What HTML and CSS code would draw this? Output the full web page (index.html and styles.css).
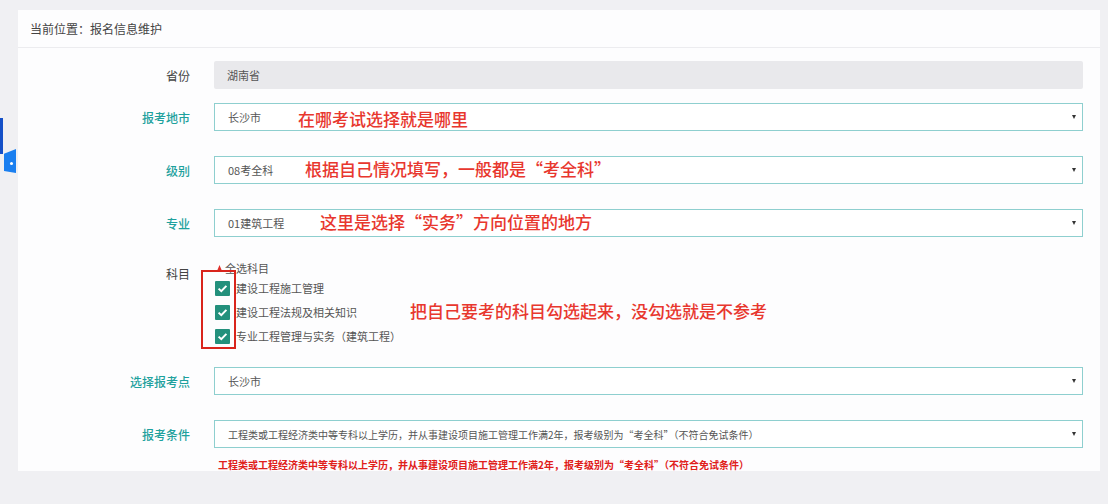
FILE: index.html
```html
<!DOCTYPE html>
<html lang="zh">
<head>
<meta charset="utf-8">
<link rel="stylesheet" href="styles.css">
</head>
<body>
<div class="side">
  <div class="tab-dark"></div>
  <div class="tab-blue"><span class="dot"></span></div>
</div>
<div class="card">
  <div class="head">当前位置：报名信息维护</div>
  <div class="form">
    <div class="row r1">
      <div class="lbl">省份</div>
      <div class="inp grey">湖南省</div>
    </div>
    <div class="row">
      <div class="lbl teal">报考地市</div>
      <div class="inp sel"><span>长沙市</span><i class="arr"></i>
        <span class="note n1">在哪考试选择就是哪里</span></div>
    </div>
    <div class="row">
      <div class="lbl teal">级别</div>
      <div class="inp sel"><span>08考全科</span><i class="arr"></i>
        <span class="note n2">根据自己情况填写，一般都是“考全科”</span></div>
    </div>
    <div class="row">
      <div class="lbl teal">专业</div>
      <div class="inp sel"><span>01建筑工程</span><i class="arr"></i>
        <span class="note n3">这里是选择“实务”方向位置的地方</span></div>
    </div>
    <div class="row subj">
      <div class="lbl sl">科目</div>
      <div class="checks">
        <div class="all"><i class="mark"></i>全选科目</div>
        <div class="item"><span class="cb"><svg viewBox="0 0 15 15" width="15" height="15"><path d="M3.6 7.6 L6.3 10.2 L11.4 4.9" fill="none" stroke="#fff" stroke-width="2"/></svg></span>建设工程施工管理</div>
        <div class="item"><span class="cb"><svg viewBox="0 0 15 15" width="15" height="15"><path d="M3.6 7.6 L6.3 10.2 L11.4 4.9" fill="none" stroke="#fff" stroke-width="2"/></svg></span>建设工程法规及相关知识</div>
        <div class="item"><span class="cb"><svg viewBox="0 0 15 15" width="15" height="15"><path d="M3.6 7.6 L6.3 10.2 L11.4 4.9" fill="none" stroke="#fff" stroke-width="2"/></svg></span>专业工程管理与实务（建筑工程）</div>
        <div class="redbox"></div>
        <span class="note n4">把自己要考的科目勾选起来，没勾选就是不参考</span>
      </div>
    </div>
    <div class="row">
      <div class="lbl teal">选择报考点</div>
      <div class="inp sel"><span>长沙市</span><i class="arr"></i></div>
    </div>
    <div class="row last">
      <div class="lbl teal">报考条件</div>
      <div class="inp sel"><span class="long">工程类或工程经济类中等专科以上学历，并从事建设项目施工管理工作满2年，报考级别为“考全科”（不符合免试条件）</span><i class="arr"></i></div>
    </div>
    <div class="warn">工程类或工程经济类中等专科以上学历，并从事建设项目施工管理工作满2年，报考级别为“考全科”（不符合免试条件）</div>
  </div>
</div>
</body>
</html>
```

FILE: styles.css
```css
html, body {
  margin: 0;
  padding: 0;
}
body {
  width: 1108px;
  height: 504px;
  background: #f0f0f3;
  display: flex;
  align-items: flex-start;
  font-family: "Noto Sans CJK SC", "Liberation Sans", sans-serif;
  color: #444;
  overflow: hidden;
}
.side {
  width: 18px;
  flex: none;
  display: flex;
  flex-direction: column;
  align-items: flex-start;
}
.tab-dark {
  width: 3px;
  height: 36px;
  margin-top: 118px;
  background: #1450c8;
}
.tab-blue {
  width: 12px;
  height: 24px;
  margin-top: -5px;
  margin-left: 4px;
  background: #1a7ff0;
  clip-path: polygon(0 20%, 100% 0, 100% 100%, 0 92%);
  display: flex;
  align-items: center;
  justify-content: center;
}
.dot {
  width: 3px;
  height: 3px;
  border-radius: 50%;
  background: #fff;
  margin-top: 4px;
  margin-left: 2px;
}
.card {
  width: 1082px;
  height: 461px;
  margin-top: 10px;
  background: #fdfdfe;
  overflow: hidden;
  flex: none;
}
.head {
  height: 37px;
  line-height: 37px;
  padding-left: 12px;
  font-size: 12px;
  color: #444;
  border-bottom: 1px solid #ececef;
}
.form {
  padding-top: 13px;
}
.row {
  display: flex;
  align-items: center;
  margin-bottom: 25px;
}
.row.r1 {
  margin-bottom: 14px;
}
.lbl {
  width: 172px;
  text-align: right;
  font-size: 12px;
  color: #444;
  margin-right: 24px;
  flex: none;
}
.lbl.teal {
  color: #1ea19d;
  font-weight: 500;
}
.inp {
  width: 869px;
  height: 28px;
  box-sizing: border-box;
  padding: 0 6px 0 13px;
  font-size: 11px;
  color: #555;
  display: flex;
  align-items: center;
  flex: none;
}
.inp.grey {
  background: #e9e9ec;
  border-radius: 2px;
}
.inp.sel {
  border: 1px solid #8ecfcf;
  background: #fff;
  justify-content: space-between;
  position: relative;
}
.arr {
  width: 0;
  height: 0;
  border-left: 2px solid transparent;
  border-right: 2px solid transparent;
  border-top: 4px solid #333;
}
.long {
  font-size: 10px;
}
.note {
  position: absolute;
  color: #e8372e;
  font-size: 17px;
  font-weight: 500;
  white-space: nowrap;
  line-height: 20px;
}
.n1 { left: 83px; top: 5px; }
.n2 { left: 90px; top: 2px; }
.n3 { left: 105px; top: 2px; }
.n4 { left: 196px; top: 41px; }
.row.subj {
  align-items: flex-start;
  margin-bottom: 19px;
  margin-top: -2px;
}
.lbl.sl {
  padding-top: 6px;
  line-height: 16px;
}
.checks {
  position: relative;
  padding-left: 1px;
  font-size: 11px;
  color: #555;
}
.all {
  height: 16px;
  line-height: 16px;
  display: flex;
  align-items: center;
  padding-left: 2px;
}
.mark {
  width: 5px;
  height: 6px;
  background: #e0302a;
  margin-right: 3px;
  clip-path: polygon(50% 0, 100% 100%, 0 100%);
}
.item {
  height: 24px;
  display: flex;
  align-items: center;
}
.cb {
  width: 15px;
  height: 15px;
  background: #23907c;
  border-radius: 1px;
  margin-right: 6px;
  display: flex;
}
.redbox {
  position: absolute;
  left: -13px;
  top: 10px;
  width: 35px;
  height: 79px;
  box-sizing: border-box;
  border: 2px solid #d9241c;
}
.row.last {
  margin-bottom: 10px;
}
.warn {
  padding-left: 200px;
  font-size: 10px;
  line-height: 13px;
  color: #e0201a;
  font-weight: 700;
}
```
